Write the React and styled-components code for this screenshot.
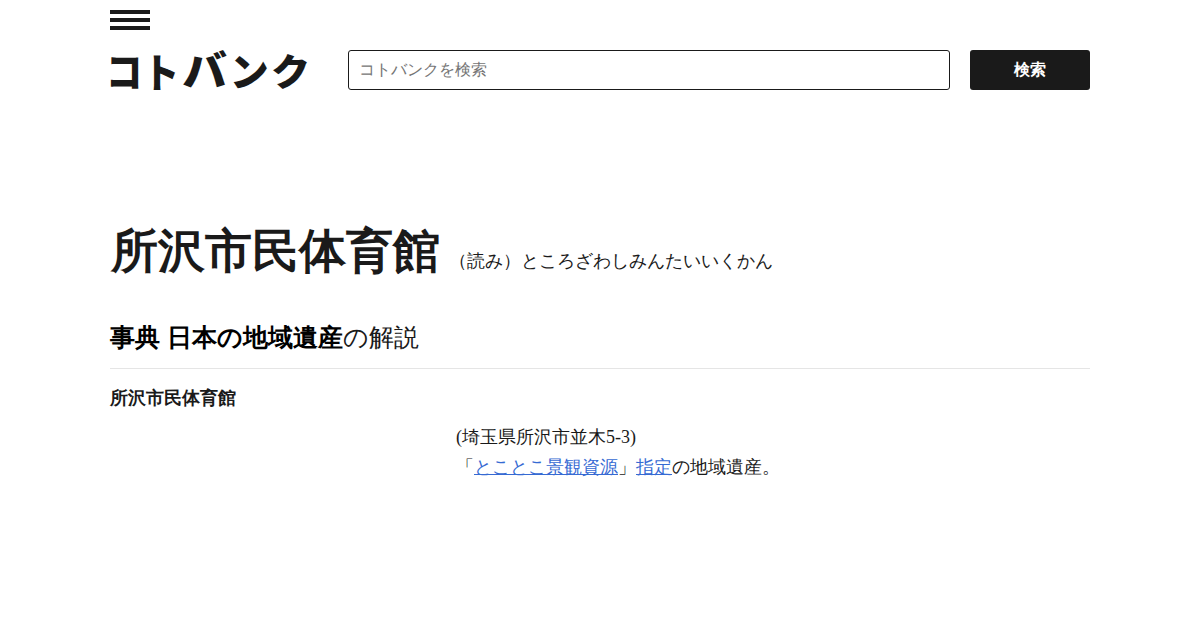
import React from "react";
import styled, { createGlobalStyle } from "styled-components";

const GlobalStyle = createGlobalStyle`
  * {
    box-sizing: border-box;
  }
  body {
    margin: 0;
    background-color: #fff;
    color: #1a1a1a;
    font-family: "Liberation Serif", serif;
    font-size: 18px;
    line-height: 30px;
  }
`;

const Container = styled.div`
  width: 980px;
  margin: 0 auto;
  padding-top: 10px;
`;

const MenuButton = styled.button`
  display: flex;
  flex-direction: column;
  gap: 4px;
  width: 40px;
  padding: 0;
  border: none;
  background: none;
  cursor: pointer;
`;
const Bar = styled.span`
  width: 40px;
  height: 4px;
  background-color: #1a1a1a;
`;

const Header = styled.header`
  display: flex;
  align-items: center;
  height: 40px;
  margin-top: 20px;
`;
const Logo = styled.a`
  width: 198px;
  height: 40px;
  margin-right: 40px;
  color: #1a1a1a;

  svg {
    display: block;
    overflow: visible;
  }
  text {
    fill: currentColor;
    font-family: "Noto Sans CJK JP", sans-serif;
    font-size: 40px;
    font-weight: 900;
  }
`;
const Form = styled.form`
  flex: 1;
  display: flex;
  gap: 20px;
`;
const Input = styled.input`
  flex: 1;
  height: 40px;
  padding: 0 10px;
  border: 1px solid #1a1a1a;
  border-radius: 3px;
  font-family: inherit;
  font-size: 16px;

  &::placeholder {
    color: #757575;
  }
`;
const SearchButton = styled.button`
  width: 120px;
  height: 40px;
  padding: 0;
  border: none;
  border-radius: 3px;
  background-color: #1a1a1a;
  color: #fff;
  font-family: inherit;
  font-size: 16px;
  font-weight: bold;
  cursor: pointer;
`;

const Title = styled.h1`
  display: flex;
  align-items: baseline;
  margin: 126px 0 0;
  padding-left: 1px;
  font-size: 47px;
  line-height: 70px;
`;
const Reading = styled.span`
  margin-left: 9px;
  font-size: 18px;
  font-weight: normal;
`;

const Source = styled.h2`
  margin: 22px 0 0;
  padding-bottom: 10px;
  border-bottom: 1px solid #e5e5e5;
  font-size: 25.2px;
  font-weight: normal;
  line-height: 40px;
  word-spacing: 1px;

  b {
    color: #000;
  }
`;
const Entry = styled.h3`
  margin: 14px 0 0;
  font-size: 18px;
  line-height: 30px;
`;
const Description = styled.section`
  margin-top: 9px;
  padding-left: 346px;
`;
const Link = styled.a`
  color: #366ad3;
  text-decoration: underline;
`;

// each letter of the logo has its own width and height
const letters = [
  { char: "コ", x: -4, y: 36.7, sx: 0.91, sy: 1.01 },
  { char: "ト", x: 33.2, y: 37.5, sx: 0.9, sy: 1.01 },
  { char: "バ", x: 72.3, y: 36, sx: 1.12, sy: 1.05 },
  { char: "ン", x: 119.8, y: 35.5, sx: 0.975, sy: 0.98 },
  { char: "ク", x: 161.1, y: 36.1, sx: 0.98, sy: 0.93 },
];

const App = () => {
  return (
    <>
      <GlobalStyle />
      <Container>
        <MenuButton aria-label="メニュー">
          <Bar />
          <Bar />
          <Bar />
        </MenuButton>
        <Header>
          <Logo href="#">
            <svg width="198" height="40" viewBox="0 0 198 40">
              {letters.map(({ char, x, y, sx, sy }) => (
                <text key={char} transform={`translate(${x} ${y}) scale(${sx} ${sy})`}>
                  {char}
                </text>
              ))}
            </svg>
          </Logo>
          <Form>
            <Input placeholder="コトバンクを検索" />
            <SearchButton type="button">検索</SearchButton>
          </Form>
        </Header>
        <Title>
          所沢市民体育館
          <Reading>（読み）ところざわしみんたいいくかん</Reading>
        </Title>
        <Source>
          <b>事典 日本の地域遺産</b>の解説
        </Source>
        <Entry>所沢市民体育館</Entry>
        <Description>
          (埼玉県所沢市並木5-3)
          <br />
          「<Link href="#">とことこ景観資源</Link>」<Link href="#">指定</Link>の地域遺産。
        </Description>
      </Container>
    </>
  );
};

export default App;
